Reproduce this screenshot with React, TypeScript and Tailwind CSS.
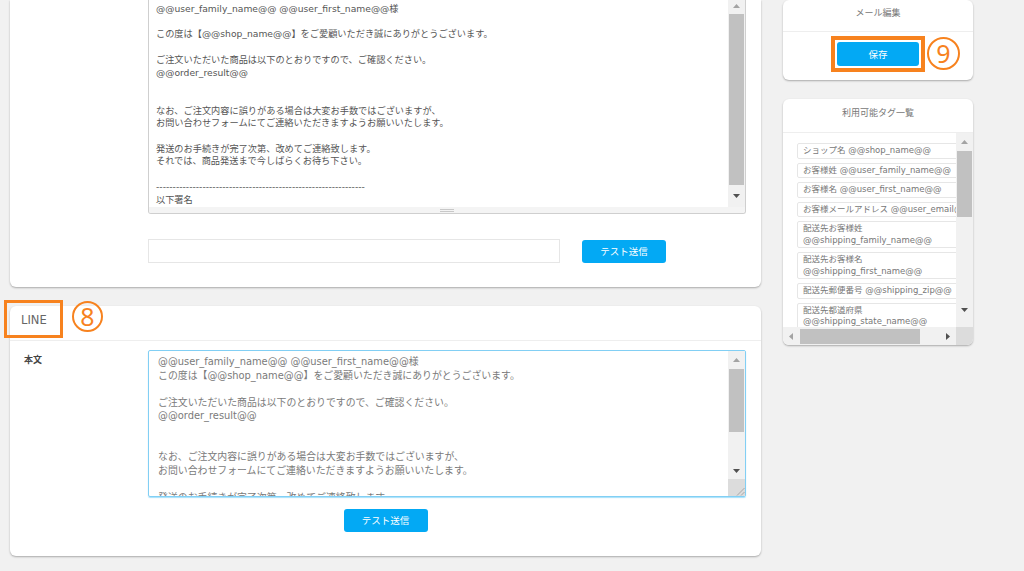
import React from "react";

const jp = "font-['DejaVu_Sans','Noto_Sans_CJK_JP',sans-serif]";

const mailTop = `@@user_family_name@@ @@user_first_name@@様

この度は【@@shop_name@@】をご愛顧いただき誠にありがとうございます。

ご注文いただいた商品は以下のとおりですので、ご確認ください。
@@order_result@@


なお、ご注文内容に誤りがある場合は大変お手数ではございますが、
お問い合わせフォームにてご連絡いただきますようお願いいたします。

発送のお手続きが完了次第、改めてご連絡致します。
それでは、商品発送まで今しばらくお待ち下さい。

---------------------------------------------------------------
以下署名`;

const mailLine = `@@user_family_name@@ @@user_first_name@@様
この度は【@@shop_name@@】をご愛顧いただき誠にありがとうございます。

ご注文いただいた商品は以下のとおりですので、ご確認ください。
@@order_result@@


なお、ご注文内容に誤りがある場合は大変お手数ではございますが、
お問い合わせフォームにてご連絡いただきますようお願いいたします。

発送のお手続きが完了次第、改めてご連絡致します。`;

const tags = [
  ["ショップ名 @@shop_name@@"],
  ["お客様姓 @@user_family_name@@"],
  ["お客様名 @@user_first_name@@"],
  ["お客様メールアドレス @@user_email@@"],
  ["配送先お客様姓", "@@shipping_family_name@@"],
  ["配送先お客様名", "@@shipping_first_name@@"],
  ["配送先郵便番号 @@shipping_zip@@"],
  ["配送先都道府県", "@@shipping_state_name@@"],
];

function Arrow({ dir, dark }: { dir: "up" | "down" | "left" | "right"; dark?: boolean }) {
  const color = dark ? "#505050" : "#a3a3a3";
  const horiz = dir === "left" || dir === "right";
  const pts = {
    up: "0,4 3.5,0 7,4",
    down: "0,0 7,0 3.5,4",
    left: "4,0 4,7 0,3.5",
    right: "0,0 0,7 4,3.5",
  }[dir];
  return (
    <svg width={horiz ? 4 : 7} height={horiz ? 7 : 4} viewBox={horiz ? "0 0 4 7" : "0 0 7 4"}>
      <polygon points={pts} fill={color} />
    </svg>
  );
}

function BlueButton({ children, className = "" }: { children: React.ReactNode; className?: string }) {
  return (
    <button
      className={`flex items-center justify-center rounded-[3px] bg-[#03a9f4] text-white text-[9.5px] font-['Noto_Sans_CJK_JP',sans-serif] ${className}`}
    >
      {children}
    </button>
  );
}

function Circled({ n, className }: { n: string; className: string }) {
  return (
    <div
      className={`absolute flex items-center justify-center rounded-full border-2 border-[#f7821e] text-[#f7821e] text-[25px] leading-none font-['Noto_Sans',sans-serif] ${className}`}
    >
      <span className="-mt-[1px]">{n}</span>
    </div>
  );
}

export default function App() {
  return (
    <div className={`w-[1024px] h-[571px] overflow-hidden bg-[#f1f1f1] flex gap-[22px] pl-[10px] ${jp}`}>
      {/* Left column */}
      <div className="w-[751px] flex flex-col gap-[19px]">
        {/* Mail card (scrolled) */}
        <div className="bg-white rounded-b-md shadow-[0_1px_2px_rgba(0,0,0,0.3)] pl-[138px] pr-[15px] pb-[24px]">
          <div className="h-[214px] border-x border-b border-[#cfcfcf] rounded-b-[3px] flex flex-col overflow-hidden">
            <div className="flex h-[207px]">
              <div className="flex-1 overflow-hidden pl-[7px] pt-[3px] whitespace-pre text-[9.2px] leading-[12.7px] text-[#555]">
                {mailTop}
              </div>
              <div className="w-[17px] bg-[#f1f1f1] flex flex-col items-center">
                <div className="h-[12px] flex items-center justify-center"><Arrow dir="up" /></div>
                <div className="mt-[2px] h-[171px] w-[15px] bg-[#c1c1c1]" />
                <div className="flex-1 flex items-center justify-center"><Arrow dir="down" dark /></div>
              </div>
            </div>
            <div className="flex-1 bg-[#f4f4f4] flex flex-col items-center justify-center gap-[1px]">
              <div className="w-[14px] h-px bg-[#c8c8c8]" />
              <div className="w-[14px] h-px bg-[#c8c8c8]" />
            </div>
          </div>
          <div className="mt-[25px] flex items-center gap-[22px]">
            <div className="w-[412px] h-[24px] border border-[#e6e6e6] bg-white" />
            <BlueButton className="w-[84px] h-[23px]">テスト送信</BlueButton>
          </div>
        </div>

        {/* LINE card */}
        <div className="relative bg-white rounded-md shadow-[0_1px_2px_rgba(0,0,0,0.3)] pb-[24px]">
          <div className="h-[35px] border-b border-[#eeeeee] pl-[11px] pt-[7px] text-[11.5px] leading-[14px] text-[#666]">
            LINE
          </div>
          <div className="flex pt-[9px]">
            <div className="w-[138px] pl-[14px] pt-[4px] text-[9px] leading-[12px] font-bold text-[#444]">本文</div>
            <div className="w-[598px] h-[147px] border border-[#82cff4] rounded-[2px] shadow-[0_1px_1px_rgba(3,169,244,0.35)] flex overflow-hidden">
              <div className="flex-1 overflow-hidden pl-[9px] pt-[4px] whitespace-pre text-[9.9px] leading-[13.6px] text-[#7a7a7a]">
                {mailLine}
              </div>
              <div className="w-[17px] bg-[#f1f1f1] flex flex-col items-center">
                <div className="h-[17px] flex items-center justify-center"><Arrow dir="up" /></div>
                <div className="mt-[1px] h-[63px] w-[15px] bg-[#c1c1c1]" />
                <div className="flex-1" />
                <div className="h-[17px] flex items-center justify-center"><Arrow dir="down" dark /></div>
                <div className="h-[17px] w-[17px] bg-[#dcdcdc] flex items-end justify-end">
                  <svg width="9" height="9" viewBox="0 0 9 9">
                    <line x1="8.5" y1="1" x2="1" y2="8.5" stroke="#999" strokeWidth="0.8" />
                    <line x1="8.5" y1="5" x2="5" y2="8.5" stroke="#999" strokeWidth="0.8" />
                  </svg>
                </div>
              </div>
            </div>
          </div>
          <div className="mt-[12px] flex justify-center">
            <BlueButton className="w-[84px] h-[23px]">テスト送信</BlueButton>
          </div>

          {/* annotations */}
          <div className="absolute -left-[6px] -top-[6px] w-[59px] h-[38px] border-[3px] border-[#f7821e]" />
          <Circled n="8" className="left-[62px] -top-[5px] w-[31px] h-[31px]" />
        </div>
      </div>

      {/* Right column */}
      <div className="w-[190px] flex flex-col gap-[19px]">
        <div className="relative bg-white rounded-md shadow-[0_1px_2px_rgba(0,0,0,0.3)]">
          <div className="h-[32px] border-b border-[#eeeeee] pt-[6px] text-center text-[9px] leading-[14px] text-[#777]">
            メール編集
          </div>
          <div className="flex justify-center pt-[4px] pb-[8px]">
            <div className="border-4 border-[#f7821e] p-[2px]">
              <BlueButton className="w-[82px] h-[24px]">保存</BlueButton>
            </div>
          </div>
          <Circled n="9" className="left-[144px] top-[37px] w-[33px] h-[33px]" />
        </div>

        <div className="bg-white rounded-md shadow-[0_1px_2px_rgba(0,0,0,0.3)] overflow-hidden">
          <div className="h-[34px] border-b border-[#eeeeee] pt-[7px] text-center text-[9px] leading-[14px] text-[#777]">
            利用可能タグ一覧
          </div>
          <div className="h-[212px] flex flex-col">
            <div className="h-[194px] flex">
              <div className="flex-1 overflow-hidden pt-[10px] pl-[14px] flex flex-col gap-[4px]">
                {tags.map((t, i) => (
                  <div
                    key={i}
                    className="w-[185px] shrink-0 border border-[#e6e6e6] rounded-[2px] px-[5px] py-[1px] text-[8.5px] leading-[11.5px] text-[#777] whitespace-nowrap"
                  >
                    {t.map((line, j) => (
                      <div key={j}>{line}</div>
                    ))}
                  </div>
                ))}
              </div>
              <div className="w-[17px] bg-[#f1f1f1] flex flex-col items-center">
                <div className="h-[18px] flex items-center justify-center"><Arrow dir="up" /></div>
                <div className="h-[66px] w-[15px] bg-[#c1c1c1]" />
                <div className="flex-1" />
                <div className="h-[20px] flex items-start justify-center pt-[1px]"><Arrow dir="down" dark /></div>
              </div>
            </div>
            <div className="flex-1 flex">
              <div className="flex-1 bg-[#f1f1f1] flex items-center">
                <div className="w-[15px] flex justify-center"><Arrow dir="left" /></div>
                <div className="ml-[2px] w-[120px] h-[15px] bg-[#c1c1c1]" />
                <div className="flex-1" />
                <div className="w-[17px] flex justify-center"><Arrow dir="right" dark /></div>
              </div>
              <div className="w-[17px] bg-[#dcdcdc]" />
            </div>
          </div>
        </div>
      </div>
    </div>
  );
}
